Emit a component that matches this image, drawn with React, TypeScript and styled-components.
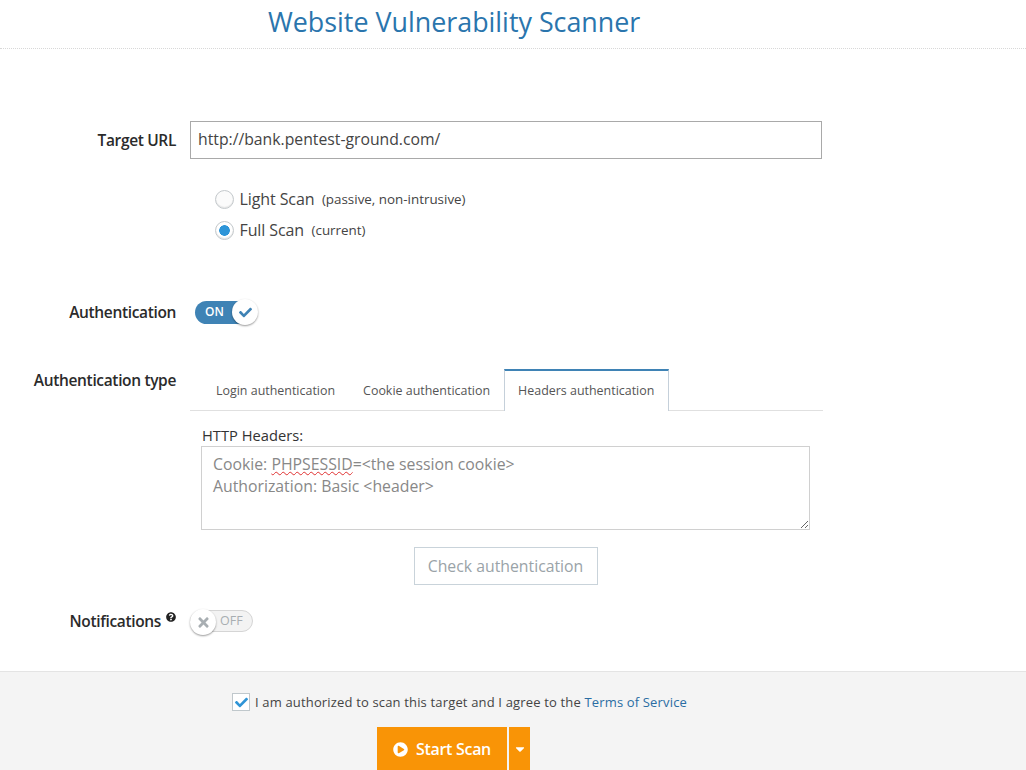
import { createGlobalStyle, styled } from 'styled-components';
import { FaCheck, FaTimes, FaPlayCircle, FaQuestionCircle, FaCaretDown } from 'react-icons/fa';

const GlobalStyle = createGlobalStyle`
  html, body {
    margin: 0;
    padding: 0;
    height: 770px;
    overflow: hidden;
    background: #fff;
    font-family: 'Open Sans', 'Liberation Sans', sans-serif;
    color: #333;
  }
  * { box-sizing: border-box; }
`;

const tabs = ['Login authentication', 'Cookie authentication', 'Headers authentication'];

export default function App() {
  return (
    <Page>
      <GlobalStyle />
      <Header>
        <Title>Website Vulnerability Scanner</Title>
      </Header>

      <Form>
        <Row $top={72}>
          <Label>Target URL</Label>
          <UrlInput>http://bank.pentest-ground.com/</UrlInput>
        </Row>

        <RadioGroup>
          <RadioRow>
            <Radio />
            <RadioName>Light Scan</RadioName>
            <RadioHint>(passive, non-intrusive)</RadioHint>
          </RadioRow>
          <RadioRow>
            <Radio $checked />
            <RadioName>Full Scan</RadioName>
            <RadioHint>(current)</RadioHint>
          </RadioRow>
        </RadioGroup>

        <Row $top={61}>
          <SwitchLabel>Authentication</SwitchLabel>
          <ToggleOn>
            ON
            <Knob $side="right">
              <FaCheck size={13} color="#3f83b5" />
            </Knob>
          </ToggleOn>
        </Row>

        <AuthRow>
          <Label>Authentication type</Label>
          <AuthBody>
            <TabBar>
              {tabs.map((tab, i) => (
                <Tab key={tab} $active={i === 2}>
                  {tab}
                </Tab>
              ))}
            </TabBar>
            <Pane>
              <FieldLabel>HTTP Headers:</FieldLabel>
              <HeaderBox>
                <div>
                  Cookie: <Misspelt>PHPSESSID</Misspelt>=&lt;the session cookie&gt;
                </div>
                <div>Authorization: Basic &lt;header&gt;</div>
              </HeaderBox>
              <CheckButton>Check authentication</CheckButton>
            </Pane>
          </AuthBody>
        </AuthRow>

        <Row $top={25}>
          <Label>
            Notifications
            <Help>
              <FaQuestionCircle size={10} color="#222" />
            </Help>
          </Label>
          <ToggleOff>
            OFF
            <Knob $side="left">
              <FaTimes size={15} color="#a8aeb2" />
            </Knob>
          </ToggleOff>
        </Row>
      </Form>

      <Footer>
        <Agree>
          <CheckBox>
            <FaCheck size={13} color="#2f94d6" />
          </CheckBox>
          <span>
            I am authorized to scan this target and I agree to the <TermsLink>Terms of Service</TermsLink>
          </span>
        </Agree>
        <Actions>
          <StartButton>
            <FaPlayCircle size={15} color="#fff" />
            Start Scan
          </StartButton>
          <CaretButton>
            <FaCaretDown size={14} color="#fff" />
          </CaretButton>
        </Actions>
      </Footer>
    </Page>
  );
}

const Page = styled.div`
  width: 1026px;
  height: 770px;
  display: flex;
  flex-direction: column;
  overflow: hidden;
`;

const Header = styled.header`
  height: 49px;
  border-bottom: 1px dotted #d8d8d8;
  padding-left: 268px;
`;

const Title = styled.h1`
  margin: 0;
  font-size: 26.85px;
  font-weight: 400;
  line-height: 44px;
  color: #2a75ad;
  white-space: nowrap;
`;

const Form = styled.main`
  flex: 1;
`;

const Row = styled.div<{ $top: number }>`
  display: flex;
  align-items: center;
  margin-top: ${(p) => p.$top}px;
`;

const Label = styled.label`
  width: 176px;
  flex: none;
  margin-right: 14px;
  text-align: right;
  font-size: 15.5px;
  font-weight: 600;
  letter-spacing: -0.35px;
  color: #2b2b2b;
  white-space: nowrap;
`;

const SwitchLabel = styled(Label)`
  padding-bottom: 1px;
`;

const UrlInput = styled.div`
  width: 632px;
  height: 38px;
  padding: 0 7px;
  border: 1px solid #a9a9a9;
  font-size: 15.75px;
  line-height: 34px;
  color: #444;
`;

const RadioGroup = styled.div`
  margin: 30px 0 0 215px;
  display: flex;
  flex-direction: column;
  gap: 11px;
`;

const RadioRow = styled.div`
  display: flex;
  align-items: center;
  height: 20px;
`;

const Radio = styled.span<{ $checked?: boolean }>`
  width: 19px;
  height: 19px;
  margin-right: 6px;
  border-radius: 50%;
  border: 1px solid #c4c9cc;
  box-shadow: inset 0 -1px 1px #e4e4e4;
  background: ${(p) => (p.$checked ? 'radial-gradient(circle, #2e95d8 0 5px, #fff 5.6px)' : '#fbfbfb')};
`;

const RadioName = styled.span`
  font-size: 16px;
  color: #444;
  margin-left: -0.5px;
  margin-right: 7.5px;
  letter-spacing: -0.1px;
`;

const RadioHint = styled.span`
  font-size: 13.4px;
  color: #444;
`;

const ToggleOn = styled.div`
  position: relative;
  width: 58px;
  height: 23px;
  margin-left: 5px;
  border-radius: 12px;
  background: #3f83b5;
  color: #fff;
  font-size: 12px;
  font-weight: 600;
  line-height: 22px;
  padding-left: 10px;
`;

const ToggleOff = styled.div`
  position: relative;
  width: 63px;
  height: 22px;
  border-radius: 11px;
  background: #f3f3f3;
  border: 1px solid #d5d5d5;
  color: #a8aeb2;
  font-size: 12.5px;
  font-weight: 400;
  line-height: 20px;
  padding-left: 29px;
`;

const Knob = styled.span<{ $side: 'left' | 'right' }>`
  position: absolute;
  top: -2px;
  ${(p) => (p.$side === 'right' ? 'right: -5px;' : 'left: -1px;')}
  width: 26px;
  height: 26px;
  border-radius: 50%;
  background: #fff;
  box-shadow: 0 1px 2px rgba(0, 0, 0, 0.4);
  display: flex;
  align-items: center;
  justify-content: center;
`;

const AuthRow = styled.div`
  display: flex;
  margin-top: 45px;
`;

const AuthBody = styled.div`
  width: 633px;
`;

const TabBar = styled.div`
  display: flex;
  height: 42px;
  padding-left: 12px;
  border-bottom: 1px solid #e0e0e0;
`;

const Tab = styled.div<{ $active?: boolean }>`
  height: 42px;
  padding: ${(p) => (p.$active ? '12px 14px 0 13px' : '14px 14px 0')};
  font-size: 12.45px;
  line-height: 16px;
  color: #555;
  white-space: nowrap;
  ${(p) =>
    p.$active &&
    `
    border-top: 2px solid #3f83b5;
    border-left: 1px solid #c5d0da;
    border-right: 1px solid #c5d0da;
    background: #fff;
    `}
`;

const Pane = styled.div`
  padding: 15px 13px 0 11px;
  display: flex;
  flex-direction: column;
`;

const FieldLabel = styled.div`
  padding-left: 1px;
  font-size: 14.7px;
  line-height: 19px;
  color: #333;
  margin-bottom: 1px;
`;

const HeaderBox = styled.div`
  width: 609px;
  height: 84px;
  padding: 6px 11px;
  border: 1px solid #d0d0d0;
  font-size: 15.8px;
  line-height: 22px;
  color: #888;
  overflow: auto;
  resize: both;
`;

const Misspelt = styled.span`
  text-decoration: underline wavy #e03030 1px;
`;

const CheckButton = styled.div`
  align-self: center;
  margin-top: 17px;
  width: 184px;
  height: 38px;
  border: 1px solid #c9d3da;
  font-size: 15.8px;
  line-height: 36px;
  text-align: center;
  color: #9aa3a8;
`;

const Help = styled.span`
  position: relative;
  top: -5px;
  margin-left: 5px;
`;

const Footer = styled.footer`
  height: 99px;
  background: #f4f4f4;
  border-top: 1px solid #e4e4e4;
  display: flex;
  flex-direction: column;
`;

const Agree = styled.div`
  display: flex;
  align-items: center;
  margin: 21px 0 0 232px;
  font-size: 13px;
  letter-spacing: 0.16px;
  color: #444;
`;

const CheckBox = styled.span`
  width: 18px;
  height: 18px;
  margin-right: 5px;
  background: #fff;
  border: 1px solid #c0c8cc;
  display: flex;
  align-items: center;
  justify-content: center;
`;

const TermsLink = styled.a`
  color: #2a6da3;
`;

const Actions = styled.div`
  display: flex;
  margin: 16px 0 0 377px;
  gap: 2px;
`;

const StartButton = styled.div`
  width: 130px;
  height: 44px;
  background: #f99406;
  color: #fff;
  font-size: 16px;
  font-weight: 600;
  letter-spacing: -0.3px;
  display: flex;
  align-items: center;
  justify-content: center;
  gap: 8px;
`;

const CaretButton = styled.div`
  width: 21px;
  height: 44px;
  background: #f99406;
  display: flex;
  align-items: center;
  justify-content: center;
`;
